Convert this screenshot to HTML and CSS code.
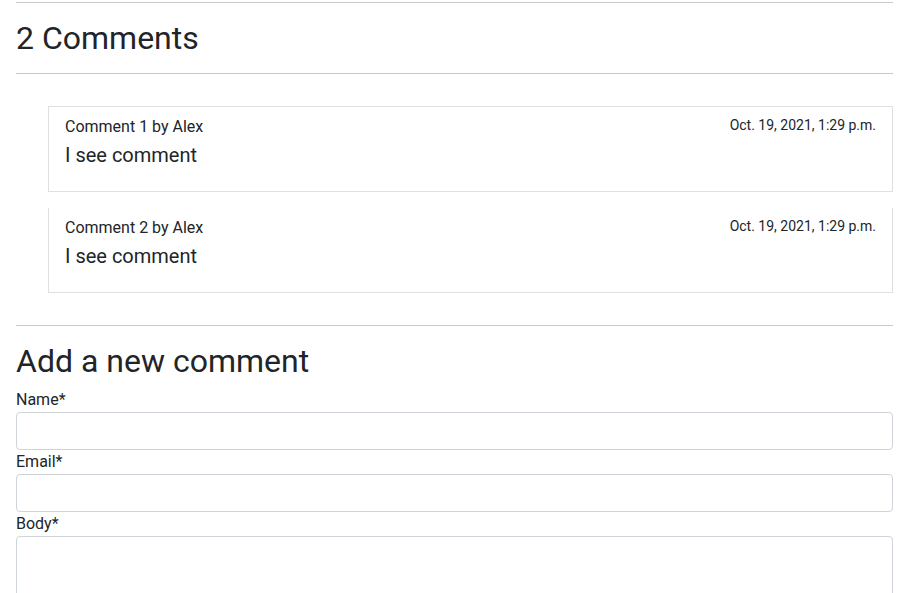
FILE: index.html
```html
<!DOCTYPE html>
<html lang="en">
<head>
<meta charset="utf-8">
<title>Comments</title>
<link rel="stylesheet" href="styles.css">
</head>
<body>
<main class="page">
  <hr class="rule rule-first">
  <h2 class="heading">2 Comments</h2>
  <hr class="rule rule-after-heading">
  <section class="comments">
    <article class="comment">
      <div class="comment-head">
        <span class="comment-author">Comment 1 by Alex</span>
        <span class="comment-date">Oct. 19, 2021, 1:29 p.m.</span>
      </div>
      <p class="comment-body">I see comment</p>
    </article>
    <article class="comment comment-next">
      <div class="comment-head">
        <span class="comment-author">Comment 2 by Alex</span>
        <span class="comment-date">Oct. 19, 2021, 1:29 p.m.</span>
      </div>
      <p class="comment-body">I see comment</p>
    </article>
  </section>
  <hr class="rule">
  <h2 class="heading heading-form">Add a new comment</h2>
  <form class="comment-form">
    <label class="field-label" for="name">Name*</label>
    <input class="field" type="text" id="name">
    <label class="field-label" for="email">Email*</label>
    <input class="field" type="email" id="email">
    <label class="field-label" for="body">Body*</label>
    <textarea class="field field-area" id="body" rows="10"></textarea>
  </form>
</main>
</body>
</html>
```

FILE: styles.css
```css
html, body {
  margin: 0;
  padding: 0;
  background: #fff;
}
body {
  font-family: Roboto, "Noto Sans", sans-serif;
  font-size: 16px;
  line-height: 1.5;
  color: #212529;
}
.page {
  padding: 0 24px 0 16px;
  display: flex;
  flex-direction: column;
}
.rule {
  border: 0;
  border-top: 1px solid #c8c9ca;
  margin: 0;
  height: 0;
}
.rule-first {
  margin-top: 2px;
}
.heading {
  font-size: 32px;
  line-height: 38.4px;
  font-weight: 400;
  margin: 16px 0 0;
}
.rule-after-heading {
  margin-top: 16px;
}
.comments {
  display: flex;
  flex-direction: column;
  gap: 16px;
  margin: 32px 0 32px 32px;
}
.comment {
  border: 1px solid #dfdfdf;
  padding: 8px 16px 21px;
}
.comment-next {
  border-top: 0;
}
.comment-head {
  display: flex;
  justify-content: space-between;
  align-items: flex-start;
}
.comment-author {
  font-size: 16px;
  line-height: 24px;
}
.comment-date {
  font-size: 14px;
  line-height: 21px;
}
.comment-body {
  margin: 1px 0 0;
  font-size: 20px;
  line-height: 30px;
}
.heading-form {
  margin: 16px 0 7px;
}
.comment-form {
  display: flex;
  flex-direction: column;
}
.field-label {
  font-size: 16px;
  line-height: 24px;
}
.field {
  box-sizing: border-box;
  height: 38px;
  border: 1px solid #ced4da;
  border-radius: 4px;
  padding: 6px 12px;
  font: inherit;
  background: #fff;
  margin: 0;
}
.field-area {
  height: 240px;
  resize: vertical;
}
```
